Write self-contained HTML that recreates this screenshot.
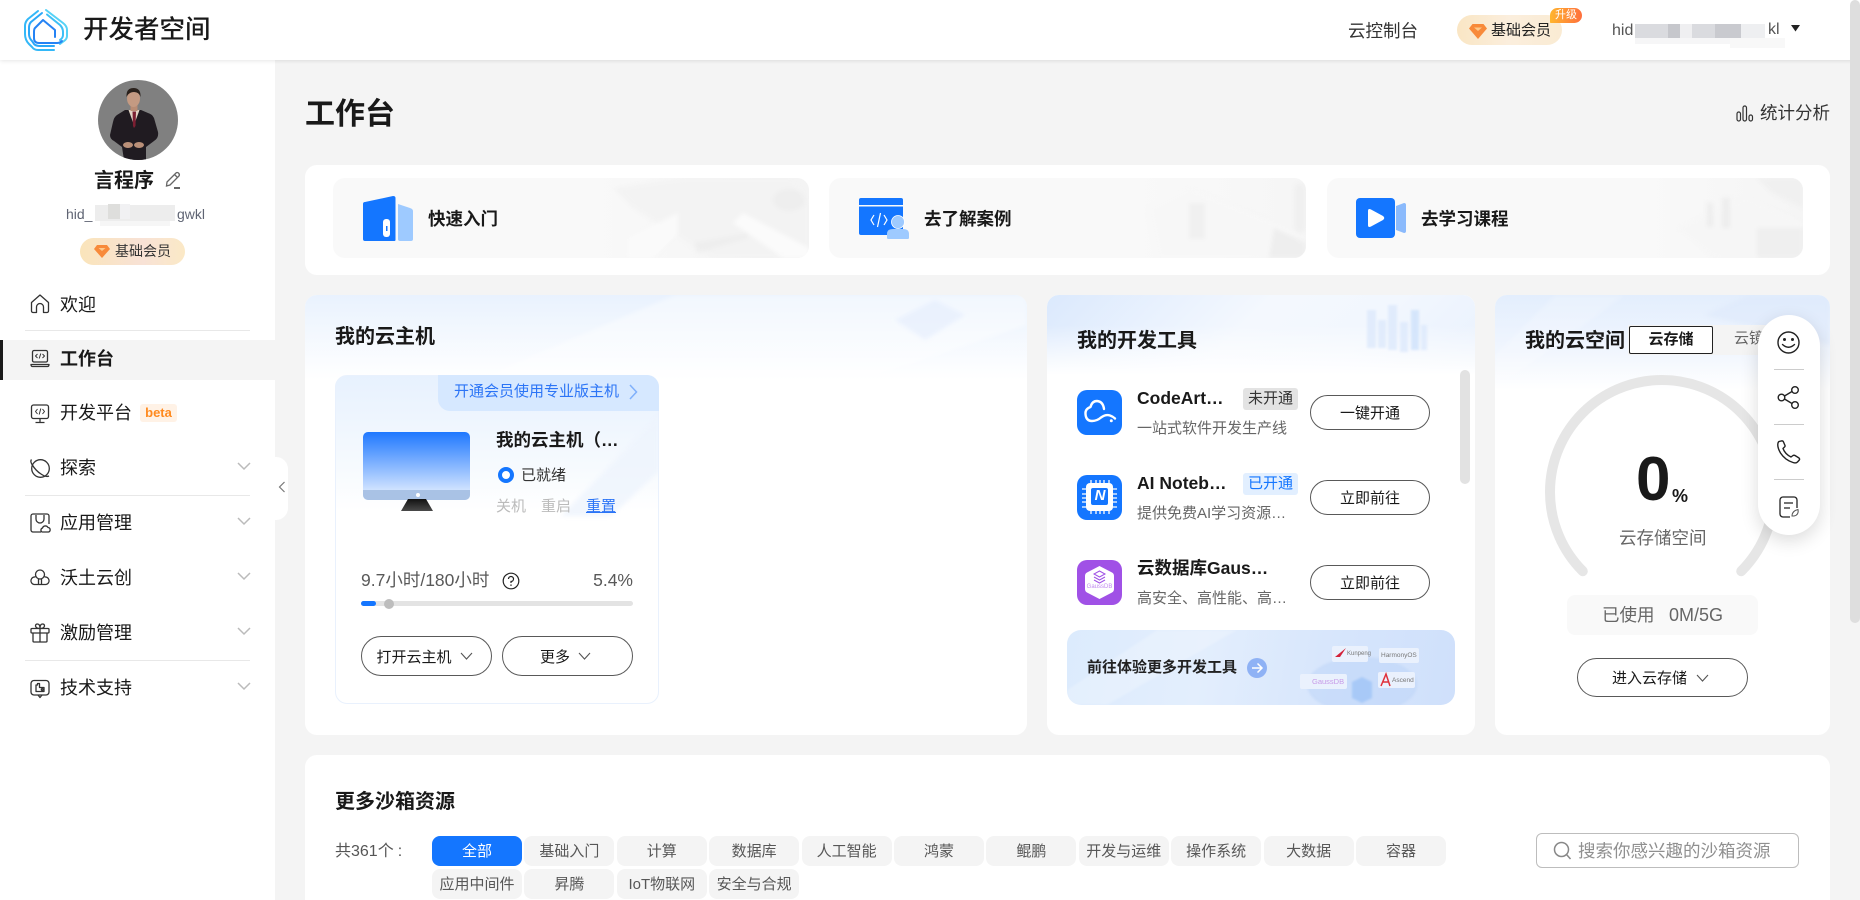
<!DOCTYPE html>
<html lang="zh-CN"><head><meta charset="utf-8"><title>开发者空间</title>
<style>
*{box-sizing:border-box;margin:0;padding:0}
html,body{width:1860px;height:900px;overflow:hidden;background:#f4f4f4}
body{position:relative;font-family:"Liberation Sans","Noto Sans CJK SC",sans-serif;color:#191919}
.a{position:absolute}
.t{position:absolute;white-space:nowrap}
svg{position:absolute;overflow:visible}
.card{position:absolute;background:#fff;border-radius:12px;overflow:hidden}
.btn{position:absolute;border:1px solid #595959;border-radius:20px;background:#fff;font-size:15px;display:flex;align-items:center;justify-content:center;color:#191919;white-space:nowrap}
.pr{padding-right:4px}
.ttl{position:absolute;font-size:20px;line-height:28px;font-weight:700;white-space:nowrap}
.nav{position:absolute;left:60px;font-size:18px;line-height:26px;color:#191919;white-space:nowrap}
.div{position:absolute;left:25px;width:225px;height:1px;background:#e8e8e8}
.tag{position:absolute;width:90px;height:30px;border-radius:8px;background:#f4f4f4;color:#575757;font-size:15px;line-height:32px;text-align:center;white-space:nowrap;overflow:hidden}
.blk{position:absolute}
.q{position:absolute;top:178px;height:80px;border-radius:12px;background:#f9f9f9;overflow:hidden}
.q div.t{font-size:17.5px;font-weight:700;line-height:26px;top:28px}
.q svg{filter:blur(2px)}
</style></head><body>

<!-- sidebar -->
<div class="a" style="left:0;top:60px;width:275px;height:840px;background:#fff"></div>
<div class="a" style="left:275px;top:457px;width:13px;height:63px;background:#fff;border-radius:0 12px 12px 0"></div>
<svg style="left:278px;top:481px" width="8" height="12" fill="none" stroke="#777" stroke-width="1.2"><path d="M6.500 1 L1.500 6 L6.500 11"/></svg>

<!-- header -->
<div class="a" style="left:0;top:0;width:1860px;height:60px;background:#fff;box-shadow:0 1px 4px rgba(0,0,0,.1)"></div>
<svg style="left:0;top:0" width="90" height="60" fill="none" stroke-linecap="round" stroke-linejoin="round">
<defs><linearGradient id="lg" x1="0" y1="0" x2="0" y2="1"><stop offset="0" stop-color="#5ad9f6"/><stop offset="1" stop-color="#1b8dfb"/></linearGradient></defs>
<path d="M38 11 L28 19 Q25 22 25 26 V34 Q25 40 29 44 L32 47 Q34 50 38 50 H54" stroke="#33b8f8" stroke-width="2"/>
<path d="M42 13 L31 22 Q29 24 29 28 V34 Q29 38 32 41 L34 44 Q36 46 40 46 H54" stroke="#2aa8f8" stroke-width="2"/>
<path d="M46 10 L63 23 Q67 26 67 30 V36 Q67 39 64 41 L60 44" stroke="#55d2f6" stroke-width="2"/>
<path d="M47 14.500 L60 25 Q63 28 63 32 V35 Q63 38 60 40" stroke="#3cc0f7" stroke-width="2"/>
<path d="M43 20 L55 30 V37 M43 20 L35 28 Q34 29 34 32 V38 Q34 43 39 43 H57 Q60 43 62 41" stroke="#2583f4" stroke-width="2"/>
</svg>
<div class="t" style="left:83px;top:12px;font-size:25.500px;line-height:36px;font-weight:500">开发者空间</div>
<div class="t" style="left:1348px;top:18px;font-size:17.500px;line-height:26px;color:#333">云控制台</div>
<div class="a" style="left:1457px;top:15px;width:105px;height:30px;border-radius:15px;background:linear-gradient(90deg,#fae6c4,#fbeedd 50%,#faebd3)"></div>
<svg style="left:1469px;top:24px" width="18" height="15"><path d="M3.500 0H14.500L18 4.500 9 15 0 4.500Z" fill="#f88a3a"/><path d="M5 3.500H13L9 7Z" fill="#fdc98a"/></svg>
<div class="t" style="left:1491px;top:20px;font-size:15px;line-height:21px;color:#222">基础会员</div>
<div class="a" style="left:1550px;top:8px;width:32px;height:15px;border-radius:8px 8px 8px 1px;background:linear-gradient(90deg,#ffb52e,#ff6f3d);color:#fff;font-size:11px;line-height:15px;text-align:center">升级</div>
<div class="t" style="left:1612px;top:20px;font-size:16px;line-height:22px;color:#555">hid</div>
<div class="blk" style="left:1635px;top:24px;width:125px;height:14px;background:#dadbdf"></div>
<div class="blk" style="left:1668px;top:24px;width:12px;height:14px;background:#c6c7cc"></div>
<div class="blk" style="left:1680px;top:24px;width:12px;height:14px;background:#efeff1"></div>
<div class="blk" style="left:1715px;top:24px;width:26px;height:14px;background:#c9cacf"></div>
<div class="blk" style="left:1741px;top:24px;width:24px;height:14px;background:#eeeff1"></div>
<div class="blk" style="left:1635px;top:38px;width:150px;height:6px;background:#f6f6f7"></div>
<div class="blk" style="left:1730px;top:38px;width:55px;height:10px;background:#f8f8f8"></div>
<div class="t" style="left:1768px;top:19px;font-size:16px;line-height:22px;color:#555">kl</div>
<svg style="left:1791px;top:25px" width="9" height="7"><path d="M0 0H9L4.500 6.500Z" fill="#222"/></svg>

<!-- profile -->
<svg style="left:98px;top:80px" width="80" height="80" viewBox="0 0 80 80">
<defs><clipPath id="av"><circle cx="40" cy="40" r="40"/></clipPath></defs>
<g clip-path="url(#av)"><rect width="80" height="80" fill="#808080"/>
<path d="M27 30 L19 35 Q16 37 15 42 L12 55 Q12 59 16 61 L24 67 L26 80 H48 L48 67 L56 61 Q61 58 60 52 L56 38 Q54 34 50 33 L43 30Z" fill="#201b21"/>
<path d="M30.500 30 L36 45 L41.500 30Z" fill="#e2d4c5"/><path d="M34.500 31.500 H38 L37.500 46 L36 48 L35 46Z" fill="#7c1f32"/>
<rect x="32.500" y="24" width="7" height="7" fill="#b98c74"/>
<ellipse cx="35.500" cy="18.500" rx="6.500" ry="8.500" fill="#c49a82"/><path d="M28.500 17 Q28 8 35.500 8 Q43 8 42.500 17 Q41 12 36 12 Q31 12 28.500 17Z" fill="#2a211c"/>
<ellipse cx="30" cy="65" rx="5" ry="3" fill="#b98f78"/><ellipse cx="41" cy="65" rx="5" ry="3" fill="#b98f78"/></g></svg>
<div class="t" style="left:94px;top:167px;font-size:20px;line-height:28px;font-weight:700">言程序</div>
<svg style="left:164px;top:171px" width="18" height="18" fill="none" stroke="#666" stroke-width="1.300"><path d="M3 11 L12 2 Q13 1 14.500 2 Q16 3.500 15 5 L6 14 L2.500 15 Z M10.500 3.500 L13.500 6.500"/><path d="M10 17 H16" stroke-width="2"/></svg>
<div class="t" style="left:66px;top:204px;font-size:14px;line-height:20px;color:#5f6473">hid_</div>
<div class="blk" style="left:95px;top:205px;width:80px;height:16px;background:#ededed"></div>
<div class="blk" style="left:108px;top:204px;width:12px;height:15px;background:#dededc"></div>
<div class="blk" style="left:120px;top:204px;width:10px;height:15px;background:#f1f1f3"></div>
<div class="blk" style="left:100px;top:221px;width:70px;height:5px;background:#f6f6f6"></div>
<div class="t" style="left:177px;top:204px;font-size:14px;line-height:20px;color:#5f6473">gwkl</div>
<div class="a" style="left:80px;top:238px;width:105px;height:27px;border-radius:14px;background:linear-gradient(90deg,#fae4ba,#f8e2d6 60%,#fbe9c6)"></div>
<svg style="left:94px;top:245px" width="16" height="13"><path d="M3 0H13L16 4 8 13 0 4Z" fill="#f88a3a"/><path d="M4.500 3H11.500L8 6Z" fill="#fdc98a"/></svg>
<div class="t" style="left:115px;top:241px;font-size:14px;line-height:21px;color:#333">基础会员</div>

<!-- nav -->
<svg style="left:30px;top:294px" width="20" height="20" fill="none" stroke="#333" stroke-width="1.300" stroke-linejoin="round"><path d="M1.500 8.500 L10 1 L18.500 8.500 V17 A1.500 1.500 0 0 1 17 18.500 H13.500 V13 A3.500 3.500 0 0 0 6.500 13 V18.500 H3 A1.500 1.500 0 0 1 1.500 17Z"/></svg>
<div class="nav" style="top:292px">欢迎</div>
<div class="div" style="top:330px"></div>

<div class="a" style="left:0;top:340px;width:275px;height:40px;background:#f4f4f4"></div>
<div class="a" style="left:0;top:340px;width:3px;height:40px;background:#191919"></div>
<svg style="left:30px;top:349px" width="20" height="20" fill="none" stroke="#333" stroke-width="1.300" stroke-linejoin="round"><rect x="2.500" y="1.500" width="15" height="11.500" rx="1.500"/><path d="M1 15.500 H19 Q19 17.500 17.500 17.500 H2.500 Q1 17.500 1 15.500Z"/><path d="M7.500 5 L5.500 7 L7.500 9 M12.500 5 L14.500 7 L12.500 9 M10.800 4.500 L9.200 9.500" stroke-width="1"/></svg>
<div class="nav" style="top:346px;font-weight:700">工作台</div>

<svg style="left:30px;top:404px" width="20" height="20" fill="none" stroke="#333" stroke-width="1.300" stroke-linejoin="round"><rect x="1.500" y="1" width="17" height="13.500" rx="2"/><path d="M10 14.500 V18 M5.500 18.500 H14.500"/><path d="M7.500 5 L5.500 7.500 L7.500 10 M12.500 5 L14.500 7.500 L12.500 10 M10.800 4.500 L9.200 10.500" stroke-width="1"/></svg>
<div class="nav" style="top:400px">开发平台</div>
<div class="a" style="left:140px;top:404px;width:37px;height:18px;border-radius:3px;background:#fff2e6;color:#ff8a1f;font-size:13px;font-weight:700;line-height:18px;text-align:center">beta</div>

<svg style="left:30px;top:458px" width="20" height="20" fill="none" stroke="#333" stroke-width="1.300"><circle cx="10.500" cy="10.500" r="8.800"/><path d="M1.500 1.500 Q0 3 2 6.500 Q6 13 11 16 Q16 19.500 19 18"/></svg>
<div class="nav" style="top:455px">探索</div>
<div class="div" style="top:495px"></div>

<svg style="left:30px;top:513px" width="20" height="20" fill="none" stroke="#333" stroke-width="1.300" stroke-linejoin="round"><path d="M11 19 H3 A2 2 0 0 1 1 17 V3 A2 2 0 0 1 3 1 H17 A2 2 0 0 1 19 3 V11"/><path d="M6 2 V6 A4 4 0 0 0 14 6 V2"/><path d="M12 19 A2.200 2.200 0 0 1 12.500 15 A3 3 0 0 1 18 14.500 A2.300 2.300 0 0 1 18.500 19Z"/></svg>
<div class="nav" style="top:510px">应用管理</div>

<svg style="left:30px;top:568px" width="20" height="20" fill="none" stroke="#333" stroke-width="1.300" stroke-linejoin="round"><circle cx="10" cy="6.500" r="4.500"/><path d="M5.500 9 A3.800 3.800 0 1 0 4 16.500 H16 A3.800 3.800 0 1 0 14.500 9 M8.500 11 V16.500 M11.500 11 V16.500"/></svg>
<div class="nav" style="top:565px">沃土云创</div>

<svg style="left:30px;top:623px" width="20" height="20" fill="none" stroke="#333" stroke-width="1.300" stroke-linejoin="round"><rect x="1" y="5.500" width="18" height="4.500" rx="1"/><path d="M3 10 V18 A1 1 0 0 0 4 19 H16 A1 1 0 0 0 17 18 V10 M10 5.500 V19 M10 5.500 Q6 5.500 5.500 3 Q5.500 1 7.500 1 Q10 1 10 5.500 Q10 1 12.500 1 Q14.500 1 14.500 3 Q14 5.500 10 5.500"/></svg>
<div class="nav" style="top:620px">激励管理</div>
<div class="div" style="top:660px"></div>

<svg style="left:30px;top:679px" width="20" height="20" fill="none" stroke="#333" stroke-width="1.300" stroke-linejoin="round"><rect x="1" y="1.500" width="18" height="14.500" rx="3"/><path d="M8 16 L10 18.500 L12 16"/><path d="M6 12.500 V6 H7.500 V4.500 H9.500 V8.500 H14 V12.500Z"/><circle cx="12.200" cy="10.500" r=".9"/></svg>
<div class="nav" style="top:675px">技术支持</div>
<svg style="left:237px;top:0" width="14" height="700" fill="none" stroke="#bbb" stroke-width="1.500"><path d="M1 463 L7 469 L13 463 M1 518 L7 524 L13 518 M1 573 L7 579 L13 573 M1 628 L7 634 L13 628 M1 683 L7 689 L13 683"/></svg>

<!-- page head -->
<div class="t" style="left:305px;top:94px;font-size:30px;line-height:42px;font-weight:700">工作台</div>
<svg style="left:1736px;top:105px" width="18" height="17" fill="none" stroke="#333" stroke-width="1.200"><rect x="1" y="7" width="3.500" height="9" rx="1.700"/><rect x="7" y="1" width="3.500" height="15" rx="1.700"/><rect x="13" y="10" width="3.500" height="6" rx="1.700"/></svg>
<div class="t" style="left:1760px;top:101px;font-size:17.500px;line-height:25px;color:#333">统计分析</div>

<!-- quick -->
<div class="card" style="left:305px;top:165px;width:1525px;height:110px"></div>
<div class="q" style="left:333px;width:476px">
<div class="a" style="left:260px;top:0;width:216px;height:80px;background:linear-gradient(90deg,#f9f9f9,#f4f4f4)"></div>
<svg style="left:260px;top:0" width="216" height="80"><path d="M20 10 L90 0 L200 0 L216 25 V80 H120 L40 30Z" fill="#f3f3f3"/><path d="M35 60 L85 35 V55 L60 80 H35Z" fill="#fafafa"/><path d="M150 35 L216 70 V80 H190 L140 45Z" fill="#fbfbfb"/><ellipse cx="196" cy="22" rx="16" ry="11" fill="#eeeeee"/><path d="M100 65 L155 55 V60 L105 75Z" fill="#eeeeee"/></svg>
<div class="t" style="left:95px;color:#191919">快速入门</div></div>
<div class="q" style="left:829px;width:477px">
<div class="a" style="left:300px;top:0;width:177px;height:80px;background:linear-gradient(90deg,#f9f9f9,#f6f6f6)"></div>
<svg style="left:300px;top:0" width="177" height="80"><path d="M20 30 L60 10 L170 55 V80 H30Z" fill="#f7f7f7"/><rect x="60" y="25" width="16" height="36" fill="#f0f0f0"/><path d="M145 50 L177 65 V80 H140Z" fill="#eeeeee"/><rect x="165" y="5" width="12" height="50" rx="6" fill="#f0f0f0"/></svg>
<div class="t" style="left:95px;color:#191919">去了解案例</div></div>
<div class="q" style="left:1327px;width:476px">
<div class="a" style="left:320px;top:0;width:156px;height:80px;background:linear-gradient(90deg,#f9f9f9,#f5f5f5)"></div>
<svg style="left:320px;top:0" width="156" height="80"><path d="M30 50 L100 20 L156 45 V80 H70Z" fill="#f6f6f6"/><rect x="60" y="25" width="6" height="24" fill="#ededed"/><rect x="75" y="20" width="8" height="30" fill="#ededed"/><path d="M110 0 H156 V30 L125 15Z" fill="#f0f0f0"/><rect x="110" y="50" width="46" height="30" fill="#efefef"/></svg>
<div class="t" style="left:94px;color:#191919">去学习课程</div></div>
<svg style="left:363px;top:196px" width="50" height="46"><path d="M0 8 Q0 6 2 6 L30 0 Q32.500 0 32.500 2 V44 Q32.500 45 31 45 H2 Q0 45 0 43Z" fill="#1476ff"/><rect x="20" y="23" width="7" height="18" rx="3" fill="#fff"/><rect x="23" y="30" width="1.500" height="5" fill="#1476ff"/><path d="M35 8 L47 12 Q50 13 50 15 V43 Q50 45 48 45 H37 Q35 45 35 43Z" fill="#9ecaff"/></svg>
<svg style="left:859px;top:198px" width="50" height="41"><path d="M2 0 H42 Q44 0 44 2 V7 H0 V2 Q0 0 2 0Z" fill="#1476ff"/><path d="M0 8.500 H44 V35 Q44 37 42 37 H2 Q0 37 0 35Z" fill="#1476ff"/><path d="M15 17 L12 22 L15 27 M25 17 L28 22 L25 27 M21.500 15 L18.500 29" stroke="#fff" stroke-width="1.200" fill="none"/><circle cx="39" cy="24" r="6.500" fill="#9ecaff" stroke="#fff" stroke-width=".8"/><path d="M28 40 V36 Q28 31 34 31 H44 Q50 31 50 36 V40 Q50 41 48 41 H30 Q28 41 28 40Z" fill="#9ecaff"/></svg>
<svg style="left:1356px;top:198px" width="50" height="40"><rect width="39" height="40" rx="4" fill="#1476ff"/><path d="M12 13 Q12 10 15 11.500 L27 18 Q29.500 20 27 22 L15 28.500 Q12 30 12 27Z" fill="#fff"/><path d="M40 8 L48 5 Q50 5 50 7 V33 Q50 35 48 35 L40 32Z" fill="#8bbafc"/></svg>

<!-- cloud host card -->
<div class="card" style="left:305px;top:295px;width:722px;height:440px">
<div class="a" style="left:0;top:0;width:722px;height:85px;background:linear-gradient(180deg,#e9f2fe,#fff)"></div>
<svg style="left:0;top:0;filter:blur(2px)" width="722" height="85"><path d="M170 85 L370 0 H722 V30 L560 85Z" fill="#fff" opacity=".4"/><path d="M590 25 L630 5 L660 20 L620 45Z" fill="#dfeafb" opacity=".5"/></svg>
</div>
<div class="ttl" style="left:335px;top:323px">我的云主机</div>
<div class="a" style="left:335px;top:375px;width:324px;height:329px;border-radius:12px;border:1px solid #e9f1fd;background:linear-gradient(180deg,#e7f1fe 0,#f6fafe 90px,#fff 135px);overflow:hidden">
<svg style="left:155px;top:35px;filter:blur(2px)" width="168" height="110"><path d="M70 105 L168 5 V60 L120 105Z" fill="#eef4fd" opacity=".8"/></svg>
</div>
<div class="a" style="left:438px;top:375px;width:221px;height:36px;background:#d6e8ff;border-radius:0 12px 0 12px"></div>
<div class="t" style="left:454px;top:381px;font-size:15px;line-height:22px;color:#2b74f6">开通会员使用专业版主机</div>
<svg style="left:628px;top:384px" width="10" height="16" fill="none" stroke="#7fb0fb" stroke-width="1.500"><path d="M2 1 L8.500 8 L2 15"/></svg>
<div class="a" style="left:363px;top:432px;width:107px;height:68px;border-radius:5px;background:linear-gradient(180deg,#1f78ff,#cfe2ff 85%);overflow:hidden"><div class="a" style="left:0;top:58px;width:107px;height:10px;background:#a9c2e5"></div></div>
<div class="a" style="left:416px;top:493px;width:4px;height:4px;border-radius:50%;background:#fff"></div>
<svg style="left:401px;top:498px" width="32" height="14"><defs><linearGradient id="st" x1="0" y1="0" x2="0" y2="1"><stop offset="0" stop-color="#111"/><stop offset="1" stop-color="#4a4a4a"/></linearGradient></defs><path d="M7 1 H25 L32 13 H0Z" fill="url(#st)"/></svg>
<div class="t" style="left:496px;top:427px;font-size:17.500px;line-height:26px;font-weight:700">我的云主机（…</div>
<div class="a" style="left:498px;top:467px;width:16px;height:16px;border-radius:50%;border:4px solid #1476ff;background:#fff"></div>
<div class="t" style="left:521px;top:465px;font-size:15px;line-height:22px;color:#333">已就绪</div>
<div class="t" style="left:496px;top:496px;font-size:15px;line-height:22px;color:#bbb">关机</div>
<div class="t" style="left:541px;top:496px;font-size:15px;line-height:22px;color:#bbb">重启</div>
<div class="t" style="left:586px;top:496px;font-size:15px;line-height:22px;color:#2b74f6;text-decoration:underline">重置</div>
<div class="t" style="left:361px;top:568px;font-size:17.500px;line-height:24px;color:#595959">9.7小时/180小时</div>
<svg style="left:502px;top:572px" width="18" height="18" fill="none" stroke="#222" stroke-width="1.200"><circle cx="9" cy="9" r="7.800"/><path d="M6.500 7 A2.500 2.500 0 1 1 9 9.500 V11"/><path d="M9 12.500 V13.800" stroke-width="1.400"/></svg>
<div class="t" style="right:1227px;top:568px;font-size:17.500px;line-height:24px;color:#595959">5.4%</div>
<div class="a" style="left:361px;top:601px;width:272px;height:5px;border-radius:3px;background:#e3e3e3"></div>
<div class="a" style="left:361px;top:601px;width:15px;height:5px;border-radius:3px;background:#1476ff"></div>
<div class="a" style="left:384px;top:599px;width:10px;height:10px;border-radius:50%;background:#bdbdbd"></div>
<div class="btn pr" style="left:361px;top:636px;width:131px;height:40px;border-radius:20px"><span style="margin-right:8px">打开云主机</span><svg style="position:static" width="13" height="8" fill="none" stroke="#555" stroke-width="1.100"><path d="M1 1 L6.500 7 L12 1"/></svg></div>
<div class="btn pr" style="left:502px;top:636px;width:131px;height:40px"><span style="margin-right:8px">更多</span><svg style="position:static" width="13" height="8" fill="none" stroke="#555" stroke-width="1.100"><path d="M1 1 L6.500 7 L12 1"/></svg></div>

<!-- tools card -->
<div class="card" style="left:1047px;top:295px;width:428px;height:440px">
<div class="a" style="left:0;top:0;width:428px;height:80px;background:linear-gradient(135deg,#dbe9fd 0,#f4f8fe 45%,#f2f7fe 70%,#e9f1fd),linear-gradient(#fff,#fff)"></div>
<div class="a" style="left:0;top:30px;width:428px;height:50px;background:linear-gradient(180deg,rgba(255,255,255,0),#fff)"></div>
<svg style="left:320px;top:5px;filter:blur(1px)" width="70" height="55" fill="#dde9fc" opacity=".8"><rect x="0" y="10" width="9" height="38"/><rect x="11" y="20" width="8" height="28"/><rect x="21" y="5" width="9" height="45"/><rect x="33" y="22" width="8" height="30"/><rect x="44" y="10" width="8" height="40" fill="#cfe2fb"/><rect x="54" y="25" width="6" height="25"/></svg>
</div>
<div class="ttl" style="left:1077px;top:327px">我的开发工具</div>

<div class="a" style="left:1077px;top:390px;width:45px;height:45px;border-radius:10px;background:#1476ff"></div>
<svg style="left:1083px;top:399px" width="34" height="26" fill="none" stroke="#fff" stroke-width="2.400" stroke-linecap="round" stroke-linejoin="round"><path d="M21 10 Q20 2.500 14 2 Q9 2 7.500 8 Q2 10 2.500 15 Q3 22 9 22 Q14 22 18 18.500 Q23 15 27 16.500 Q30 17.500 32 19.500"/><circle cx="28.300" cy="21.700" r=".9" fill="#fff" stroke-width="1.200"/></svg>
<div class="t" style="left:1137px;top:385px;font-size:17.500px;line-height:26px;font-weight:700">CodeArt…</div>
<div class="a" style="left:1243px;top:388px;width:55px;height:22px;border-radius:3px;background:#e3e3e3;font-size:15px;line-height:22px;text-align:center;color:#333">未开通</div>
<div class="t" style="left:1137px;top:418px;font-size:15px;line-height:22px;color:#666">一站式软件开发生产线</div>
<div class="btn" style="left:1310px;top:395px;width:120px;height:35px">一键开通</div>

<div class="a" style="left:1077px;top:475px;width:45px;height:45px;border-radius:10px;background:#1476ff"></div>
<svg style="left:1083px;top:481px" width="34" height="34" fill="none" stroke="#fff" stroke-width="1.300"><rect x="3" y="2" width="27" height="28" rx="4" fill="#fff" stroke="none"/><path d="M8 -1 V3 M13 -1 V3 M17 -1 V3 M21 -1 V3 M26 -1 V3 M8 29 V33 M13 29 V33 M17 29 V33 M21 29 V33 M26 29 V33 M-1 8 H3 M-1 13 H3 M-1 17 H3 M-1 21 H3 M-1 26 H3 M30 8 H34 M30 13 H34 M30 17 H34 M30 21 H34 M30 26 H34"/><rect x="8" y="7" width="17" height="17" rx="2" fill="#1476ff" stroke="none"/></svg>
<div class="t" style="left:1090px;top:486px;width:20px;text-align:center;font-size:15px;line-height:20px;font-weight:700;font-style:italic;color:#fff">N</div>
<div class="t" style="left:1137px;top:470px;font-size:17.500px;line-height:26px;font-weight:700">AI Noteb…</div>
<div class="a" style="left:1243px;top:473px;width:55px;height:22px;border-radius:3px;background:#e2efff;font-size:15px;line-height:22px;text-align:center;color:#1476ff">已开通</div>
<div class="t" style="left:1137px;top:503px;font-size:15px;line-height:22px;color:#666">提供免费AI学习资源…</div>
<div class="btn" style="left:1310px;top:480px;width:120px;height:35px">立即前往</div>

<div class="a" style="left:1077px;top:560px;width:45px;height:45px;border-radius:10px;background:#a051e6"></div>
<svg style="left:1085px;top:566px" width="29" height="33"><path d="M14.500 0 L27 6.500 Q29 7.500 29 10 V23 Q29 25.500 27 26.500 L14.500 33 L2 26.500 Q0 25.500 0 23 V10 Q0 7.500 2 6.500Z" fill="#fff"/><g fill="none" stroke="#a051e6" stroke-width="1"><path d="M14.500 5 L20 8 L14.500 11 L9 8Z M9 11 L14.500 14 L20 11 M9 14 L14.500 17 L20 14"/></g></svg>
<div class="t" style="left:1086px;top:582px;width:27px;text-align:center;font-size:6px;line-height:10px;color:#c08aef">GaussDB</div>
<div class="t" style="left:1137px;top:555px;font-size:17.500px;line-height:26px;font-weight:700">云数据库Gaus…</div>
<div class="t" style="left:1137px;top:588px;font-size:15px;line-height:22px;color:#666">高安全、高性能、高…</div>
<div class="btn" style="left:1310px;top:565px;width:120px;height:35px">立即前往</div>

<div class="a" style="left:1460px;top:370px;width:10px;height:114px;border-radius:5px;background:#e2e2e2"></div>

<div class="a" style="left:1067px;top:630px;width:388px;height:75px;border-radius:14px;background:linear-gradient(100deg,#dcebfd,#e3eefd 35%,#d6e5fc 70%,#cfe0fb);overflow:hidden">
<svg style="left:0;top:0;filter:blur(1px)" width="388" height="75"><path d="M0 60 L90 0 H170 L40 75 H0Z" fill="#fff" opacity=".22"/><ellipse cx="295" cy="55" rx="55" ry="28" fill="#bcd4f8" opacity=".5"/><path d="M285 52 L295 47 L305 52 V68 L295 73 L285 68Z" fill="#a8c9f7"/></svg>
<div class="a" style="left:265px;top:16px;width:36px;height:16px;background:#eaf1fd;border-radius:2px"></div>
<div class="a" style="left:312px;top:18px;width:40px;height:15px;background:#eaf1fd;border-radius:2px"></div>
<div class="a" style="left:233px;top:44px;width:47px;height:15px;background:#eaf1fd;border-radius:2px"></div>
<div class="a" style="left:311px;top:42px;width:37px;height:16px;background:#eaf1fd;border-radius:2px"></div>
<svg style="left:268px;top:18px" width="12" height="10"><path d="M0 9 L11 0 L5 9Z" fill="#d3223a"/></svg>
<svg style="left:314px;top:44px" width="10" height="12"><path d="M0 12 L5 0 L9 12 M2 8 H8" fill="none" stroke="#e0303a" stroke-width="1.500"/></svg>
<div class="t" style="left:280px;top:20px;font-size:6px;line-height:9px;color:#777">Kunpeng</div>
<div class="t" style="left:314px;top:21px;font-size:6.500px;line-height:9px;color:#777">HarmonyOS</div>
<div class="t" style="left:245px;top:47px;font-size:7.500px;line-height:10px;color:#c79be8">GaussDB</div>
<div class="t" style="left:325px;top:46px;font-size:6.500px;line-height:9px;color:#777">Ascend</div>
</div>
<div class="t" style="left:1087px;top:657px;font-size:15px;line-height:22px;font-weight:700;color:#222">前往体验更多开发工具</div>
<div class="a" style="left:1247px;top:658px;width:20px;height:20px;border-radius:50%;background:#8fb2f5"></div>
<svg style="left:1247px;top:658px" width="20" height="20" fill="none" stroke="#fff" stroke-width="1.500"><path d="M5 10 H15 M10.500 5.500 L15 10 L10.500 14.500"/></svg>

<!-- cloud space -->
<div class="card" style="left:1495px;top:295px;width:335px;height:440px">
<div class="a" style="left:0;top:0;width:335px;height:95px;background:linear-gradient(180deg,#e3eefd,#f1f6fe 60%,#fff)"></div>
<svg style="left:0;top:0;filter:blur(2px)" width="335" height="95"><path d="M60 0 L0 60 V95 L130 0Z" fill="#fff" opacity=".2"/><path d="M210 20 L255 0 H335 V50Z" fill="#dbe8fb" opacity=".5"/></svg>
</div>
<div class="ttl" style="left:1525px;top:327px">我的云空间</div>
<div class="a" style="left:1628px;top:325px;width:150px;height:30px;background:#f4f4f4"></div>
<div class="a" style="left:1629px;top:326px;width:84px;height:28px;background:#fff;border:1px solid #222;border-radius:2px;text-align:center;font-size:15px;line-height:25px;font-weight:700">云存储</div>
<div class="t" style="left:1734px;top:328px;font-size:15px;line-height:22px;color:#666">云镜像</div>
<svg style="left:1500px;top:340px" width="330" height="260" fill="none"><path d="M82.800 231.200 A112 112 0 1 1 241.200 231.200" stroke="#e6e6e6" stroke-width="10" stroke-linecap="round"/></svg>
<div class="t" style="left:1636px;top:445px;font-size:62px;line-height:70px;font-weight:700;color:#191919">0</div>
<div class="t" style="left:1672px;top:484px;font-size:18px;line-height:24px;font-weight:700">%</div>
<div class="t" style="left:1619px;top:525px;font-size:17.500px;line-height:26px;color:#666">云存储空间</div>
<div class="a" style="left:1567px;top:595px;width:191px;height:40px;border-radius:8px;background:#f9f9f9"></div>
<div class="t" style="left:1602px;top:602px;font-size:17.500px;line-height:26px;color:#666">已使用</div>
<div class="t" style="left:1669px;top:602px;font-size:18px;line-height:26px;color:#666">0M/5G</div>
<div class="btn pr" style="left:1577px;top:658px;width:171px;height:39px"><span style="margin-right:9px">进入云存储</span><svg style="position:static" width="13" height="8" fill="none" stroke="#555" stroke-width="1.100"><path d="M1 1 L6.500 7 L12 1"/></svg></div>

<!-- sandbox -->
<div class="card" style="left:305px;top:755px;width:1525px;height:160px"></div>
<div class="ttl" style="left:335px;top:788px">更多沙箱资源</div>
<div class="t" style="left:335px;top:840px;font-size:16px;line-height:24px;color:#555">共361个<span style="margin-left:4px">:</span></div>
<div class="tag" style="left:432px;top:836px;background:#1476ff;color:#fff">全部</div>
<div class="tag" style="left:524.400px;top:836px">基础入门</div>
<div class="tag" style="left:616.800px;top:836px">计算</div>
<div class="tag" style="left:709.200px;top:836px">数据库</div>
<div class="tag" style="left:801.600px;top:836px">人工智能</div>
<div class="tag" style="left:894px;top:836px">鸿蒙</div>
<div class="tag" style="left:986.400px;top:836px">鲲鹏</div>
<div class="tag" style="left:1078.800px;top:836px">开发与运维</div>
<div class="tag" style="left:1171.200px;top:836px">操作系统</div>
<div class="tag" style="left:1263.600px;top:836px">大数据</div>
<div class="tag" style="left:1356px;top:836px">容器</div>
<div class="tag" style="left:432px;top:869px">应用中间件</div>
<div class="tag" style="left:524.400px;top:869px">昇腾</div>
<div class="tag" style="left:616.800px;top:869px">IoT物联网</div>
<div class="tag" style="left:709.200px;top:869px">安全与合规</div>
<div class="a" style="left:1536px;top:833px;width:263px;height:35px;border:1px solid #bdbdbd;border-radius:6px;background:#fff"></div>
<svg style="left:1553px;top:841px" width="19" height="20" fill="none" stroke="#888" stroke-width="1.500"><circle cx="8.500" cy="8.500" r="7"/><path d="M13.500 13.500 L17.500 18"/></svg>
<div class="t" style="left:1578px;top:838px;font-size:17.500px;line-height:26px;color:#909090">搜索你感兴趣的沙箱资源</div>

<!-- floating -->
<div class="a" style="left:1758px;top:315px;width:62px;height:220px;border-radius:31px;background:#fff;box-shadow:0 6px 18px rgba(0,0,0,.14)"></div>
<div class="a" style="left:1774px;top:369px;width:30px;height:1px;background:#ccc"></div>
<div class="a" style="left:1774px;top:424px;width:30px;height:1px;background:#ccc"></div>
<div class="a" style="left:1774px;top:479px;width:30px;height:1px;background:#ccc"></div>
<svg style="left:1777px;top:331px" width="23" height="23" fill="none" stroke="#222" stroke-width="1.400" stroke-linecap="round"><circle cx="11.500" cy="11.500" r="10.500"/><path d="M5.500 13.500 Q11.500 19 17.500 13.500"/><circle cx="7.500" cy="8.500" r=".8" fill="#222"/><circle cx="15.500" cy="8.500" r=".8" fill="#222"/></svg>
<svg style="left:1777px;top:386px" width="23" height="23" fill="none" stroke="#222" stroke-width="1.400"><circle cx="4.500" cy="11.500" r="3.300"/><circle cx="18" cy="4" r="3.300"/><circle cx="18" cy="19" r="3.300"/><path d="M7.500 10 L15 5.500 M7.500 13 L15 17.500"/></svg>
<svg style="left:1777px;top:440px" width="24" height="24" fill="none" stroke="#222" stroke-width="1.400" stroke-linejoin="round"><path d="M2 1.500 L5 0.800 Q6 0.800 6.500 2 L8 5.500 Q8.300 6.500 7.500 7 L6 8.500 Q8 14 14 17 L16 15.500 Q17 15 18 15.500 L22 18 Q23 19 22.300 20 L20.500 22 Q19 23.500 16 22.500 Q8 20 3.500 13 Q0 7 1 3 Q1.300 2 2 1.500Z"/></svg>
<svg style="left:1779px;top:496px" width="21" height="22" fill="none" stroke="#222" stroke-width="1.300"><path d="M11 21 H4 A3 3 0 0 1 1 18 V4 A3 3 0 0 1 4 1 H15 A3 3 0 0 1 18 4 V12"/><path d="M5 7 H14 M5 12 H11"/><path d="M13 20 Q13 15 19 13.500 Q20 19 15 20 Z" stroke="#555" stroke-width="1"/></svg>

<!-- page scrollbar -->
<div class="a" style="left:1850px;top:0;width:10px;height:623px;border-radius:5px;background:#dedede"></div>
</body></html>
